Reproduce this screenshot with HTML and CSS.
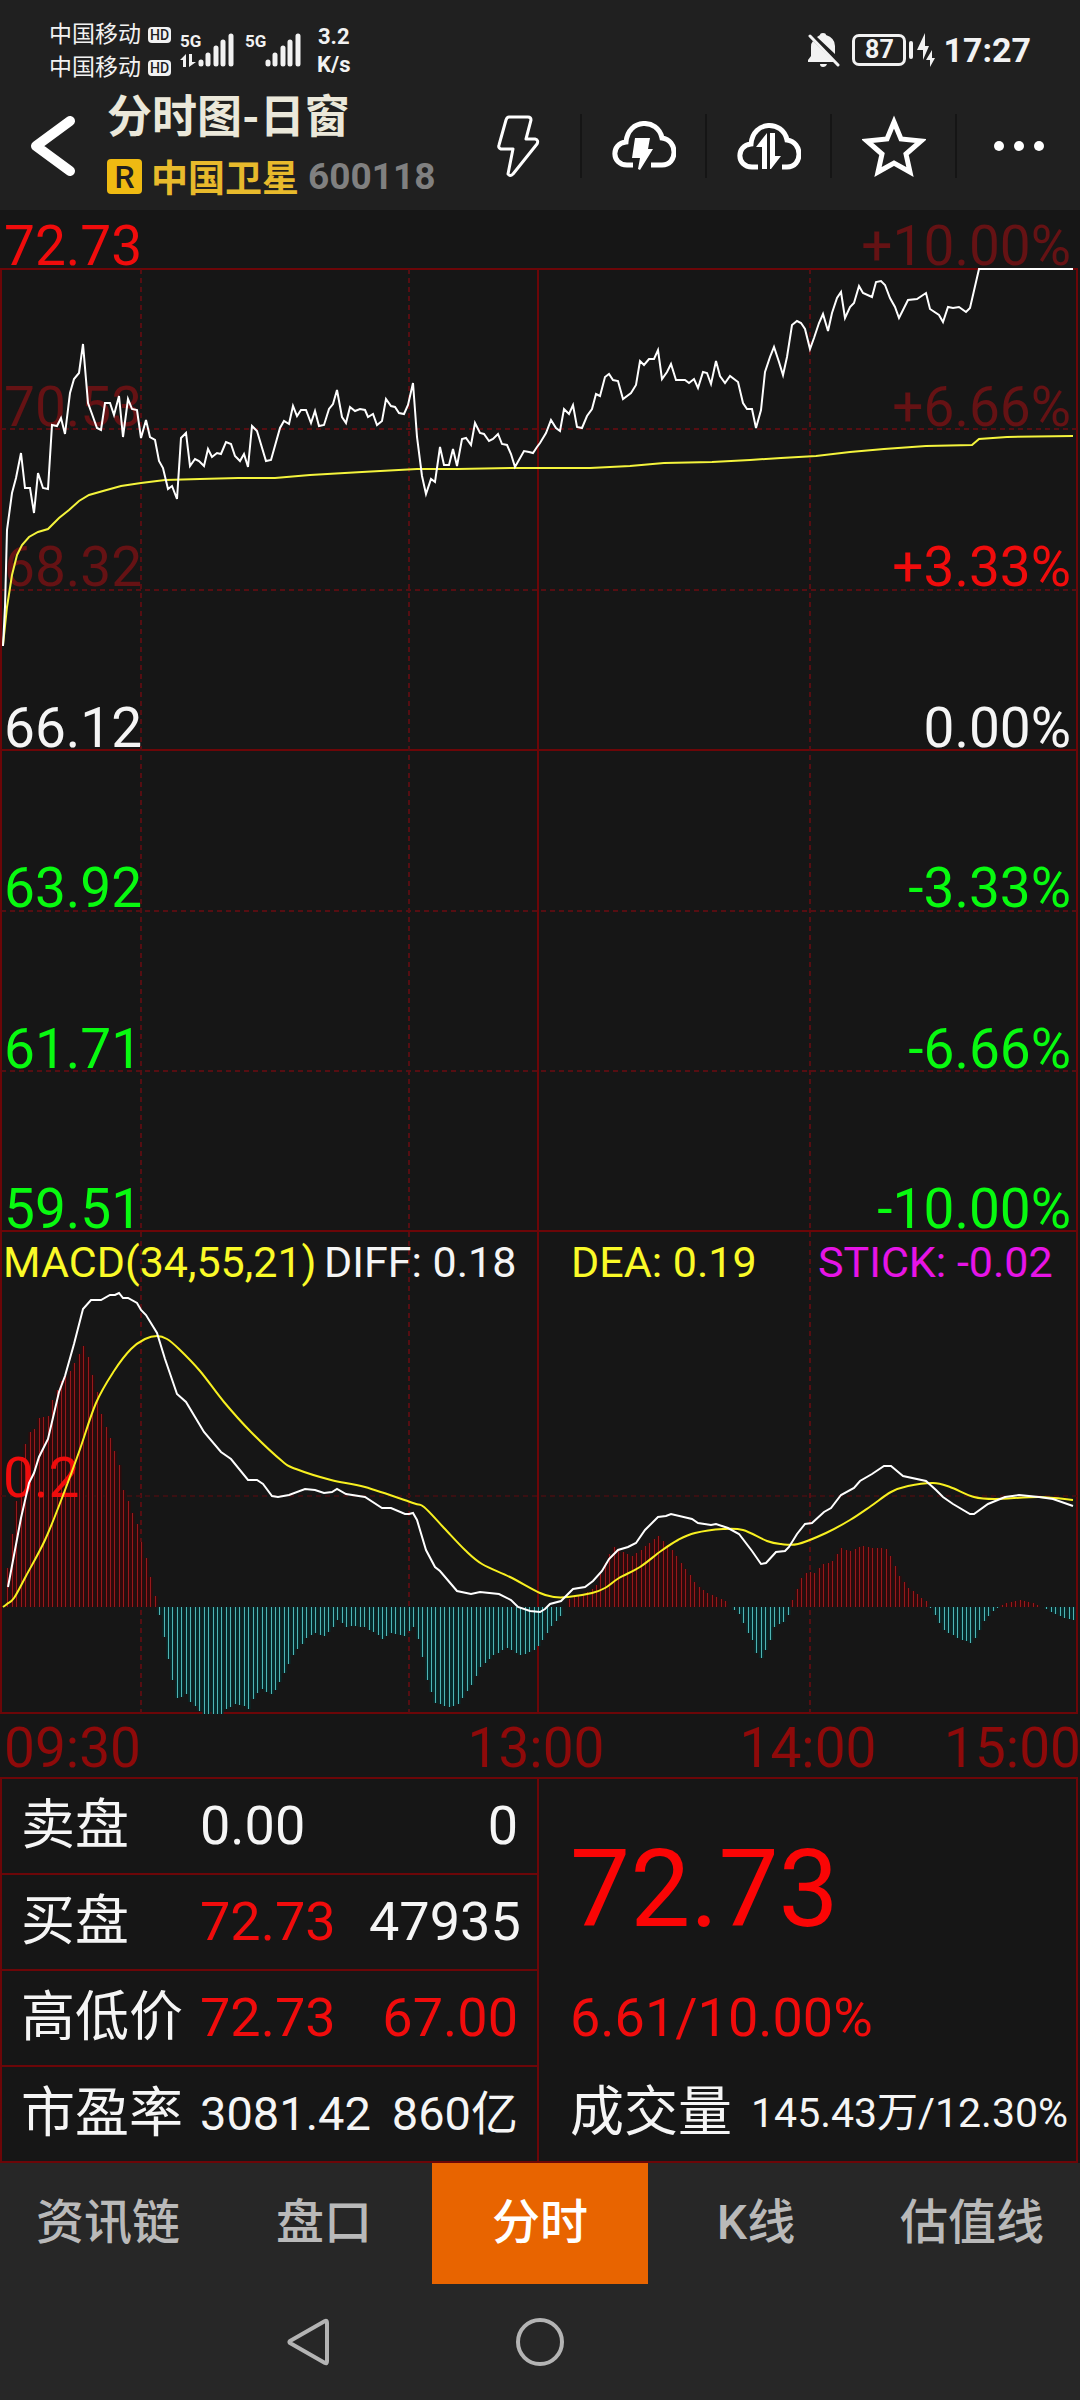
FILE: index.html
```
<!DOCTYPE html>
<html lang="zh-CN">
<head>
  <meta charset="UTF-8" />
  <meta name="viewport" content="width=device-width, initial-scale=1.0">
  <title>分时图-日窗</title>
  <link rel="stylesheet" href="styles.css">
</head>
<body>
  <div class="app">
    <header class="header">
      <div class="status-bar">
        <div class="carriers">
          <div class="carrier">中国移动<span class="hd">HD</span></div>
          <div class="carrier">中国移动<span class="hd">HD</span></div>
        </div>
        <div class="signal">
          <div class="network">
            <span>5G</span>
            <svg width="16" height="13" viewBox="0 0 16 13" fill="#f2f2f2"><path d="M6 0v13H3V6H0zM9 0h3v8h4l-7 5z"/></svg>
          </div>
          <svg width="36" height="34" viewBox="0 0 36 34" stroke="#f2f2f2" stroke-width="5" stroke-linecap="round"><path d="M3 29v2M10 22v9M18 15v16M25 9v22M33 3v28"/></svg>
        </div>
        <div class="signal second">
          <div class="network"><span>5G</span></div>
          <svg width="36" height="34" viewBox="0 0 36 34" stroke="#f2f2f2" stroke-width="5" stroke-linecap="round"><path d="M3 29v2M10 22v9M18 15v16M25 9v22M33 3v28"/></svg>
        </div>
        <div class="speed">3.2<br>K/s</div>
        <div class="status-right">
          <svg width="32" height="34" viewBox="0 0 32 34" fill="#f2f2f2"><path d="M12 2q0-2 3-2t3 2q9 3 9 11v8L9 4zM5 8l21 21H0v-2l3-4V14q0-4 2-6zM12 31h7q-1 3-4 3t-3-3z"/><path d="M2 3l28 29" stroke="#f2f2f2" stroke-width="3" stroke-linecap="round"/></svg>
          <div class="battery">87</div>
          <svg class="charge" width="18" height="34" viewBox="0 0 18 34" fill="#f2f2f2"><path d="M8 0v13h4L6 27V17H0zM15 17v8h3l-5 9v-7H9z"/></svg>
          <span class="clock">17:27</span>
        </div>
      </div>

      <div class="title-bar">
        <button class="back" aria-label="返回">
          <svg width="48" height="62" viewBox="0 0 48 62" fill="none" stroke="#fff" stroke-width="10" stroke-linecap="round" stroke-linejoin="round"><path d="M41 6L7 31l34 25"/></svg>
        </button>
        <div class="titles">
          <h1>分时图-日窗</h1>
          <div class="stock">
            <span class="badge">R</span>
            <span class="stock-name">中国卫星</span>
            <span class="stock-code">600118</span>
          </div>
        </div>
        <div class="tools">
          <button aria-label="闪电下单">
            <svg width="44" height="64" viewBox="0 0 44 64" fill="none" stroke="#fff" stroke-width="3" stroke-linejoin="round"><path d="M13 3h19q3 0 3 3l-5 19h9q4 1 2 5L17 60q-3 3-5 0l5-25H5q-3-1-2-4l7-25q1-3 3-3z"/></svg>
          </button>
          <button aria-label="云条件单">
            <svg width="64" height="50" viewBox="0 0 64 50"><path d="M21 44H15C-1 44-1 22 14 21 16-3 46-3 50 17 66 19 66 44 50 44H39" fill="none" stroke="#fff" stroke-width="5"/><path d="M23 17h15l-2 11h5L28 49l-2-1 2-11h-8z" fill="#fff"/></svg>
          </button>
          <button aria-label="云同步">
            <svg width="64" height="50" viewBox="0 0 64 50"><path d="M21 46H15C-1 46-1 24 14 23 16-1 46-1 50 19 66 21 66 46 50 46H45" fill="none" stroke="#fff" stroke-width="5"/><path d="M30 12v36h-5V26h-6zM33 12h5v23h6L34 48h-1z" fill="#fff"/></svg>
          </button>
          <button aria-label="自选">
            <svg width="64" height="62" viewBox="0 0 64 62" fill="none" stroke="#fff" stroke-width="5"><path d="M32 7l7 17 20 2-15 13 4 18-16-9-16 9 4-18L5 26l20-2z"/></svg>
          </button>
          <button aria-label="更多">
            <svg width="50" height="10" viewBox="0 0 50 10" fill="#fff"><circle cx="5" cy="5" r="5"/><circle cx="25" cy="5" r="5"/><circle cx="45" cy="5" r="5"/></svg>
          </button>
        </div>
      </div>
    </header>

    <main class="main">
      <section class="price-chart">
        <div class="axis-row up"><span>72.73</span><span class="dim">+10.00%</span></div>
        <div class="axis-row up"><span class="dim">70.53</span><span class="dim">+6.66%</span></div>
        <div class="axis-row up"><span class="dim">68.32</span><span>+3.33%</span></div>
        <div class="axis-row"><span>66.12</span><span>0.00%</span></div>
        <div class="axis-row down"><span>63.92</span><span>-3.33%</span></div>
        <div class="axis-row down"><span>61.71</span><span>-6.66%</span></div>
        <div class="axis-row down"><span>59.51</span><span>-10.00%</span></div>
        <svg class="plot" viewBox="0 -7 1080 1022" preserveAspectRatio="none">
          <path class="grid" d="M1 1015V52H1077V1015M538 52V1015M1 533H1077M1 1014H1077"/>
          <path class="grid dashed" d="M1 212H1077M1 373H1077M1 694H1077M1 854H1077M141 52V1015M409 52V1015M810 52V1015"/>
          <polyline class="line-avg" points="3,428 7,390 12,358 17,338 22,328 29,320 38,315 48,312 59,301 69,293 79,284 89,278 103,274 121,269 141,266 165,263 200,262 238,261 275,261 310,258 362,255 417,252 458,252 513,251 590,251 630,249 664,246 712,245 750,243 781,241 816,239 850,235 884,232 926,229 972,228 979,222 1007,220 1073,219"/>
          <polyline class="line-price" points="3,429 5,390 7,313 12,276 16,261 21,236 25,271 30,271 34,296 38,256 43,271 48,272 52,208 57,209 61,201 65,217 70,176 74,162 79,156 83,127 88,186 92,197 97,211 101,213 105,186 110,186 114,198 119,179 123,220 128,182 132,192 137,193 141,221 146,203 150,220 155,223 159,244 163,251 168,272 172,269 177,282 181,221 186,216 190,249 195,242 199,244 204,249 208,232 212,240 217,236 221,237 226,225 231,227 235,239 240,244 244,237 248,250 252,209 257,214 266,244 271,243 280,211 284,204 289,207 293,189 297,199 301,193 306,193 311,206 315,194 319,209 324,208 329,192 333,187 337,173 342,200 346,206 350,190 355,194 360,192 365,193 368,200 373,197 377,208 382,204 386,182 391,189 395,190 399,196 404,197 408,188 413,166 417,220 422,259 426,277 431,262 435,265 440,230 444,248 449,248 453,232 457,249 462,222 466,221 471,228 475,206 480,216 484,217 489,224 493,222 498,217 502,227 507,228 511,237 515,250 524,234 529,235 533,236 537,230 540,226 546,216 551,203 556,211 560,214 564,192 569,197 573,188 577,210 582,211 587,199 592,192 596,177 600,179 605,160 609,157 613,163 618,164 623,182 631,176 636,168 640,144 644,148 649,142 654,142 658,133 662,162 667,155 671,147 676,163 685,163 689,166 694,162 698,171 703,155 707,156 711,167 716,144 720,159 725,166 730,159 738,165 743,186 747,192 752,192 756,211 761,193 765,155 770,140 774,130 779,145 783,158 787,140 792,108 797,104 801,106 805,112 810,132 814,121 819,106 823,97 828,114 832,96 837,81 841,75 845,101 850,90 854,86 859,69 863,76 872,80 876,65 881,64 885,68 890,81 895,90 899,101 908,83 917,82 926,76 930,92 939,98 943,105 948,90 953,91 959,90 966,95 970,91 979,52 1073,52"/>
        </svg>
      </section>

      <section class="macd-chart">
        <svg class="plot" viewBox="0 0 1080 482" preserveAspectRatio="none">
          <path class="grid" d="M1 0V481H1077V0M538 0V481"/>
          <path class="grid dashed" d="M141 0V481M409 0V481M810 0V481"/>
          <path class="grid dashed faint" d="M1 264H1077"/>
          <path id="shadeUp" class="shade-up"/>
          <path id="shadeDown" class="shade-down"/>
          <path id="barsUp" class="bars-up"/>
          <path id="barsDown" class="bars-down"/>
        </svg>
        <span class="macd-level">0.2</span>
        <div class="legend">
          <span class="yellow">MACD(34,55,21)</span>
          <span>DIFF: 0.18</span>
          <span class="yellow">DEA: 0.19</span>
          <span class="magenta">STICK: -0.02</span>
        </div>
        <svg class="plot" viewBox="0 0 1080 482" preserveAspectRatio="none">
          <path id="dea" class="line-dea"/>
          <polyline class="line-diff" points="8,355 21,286 29,251 34,241 39,225 48,207 59,160 65,144 74,112 83,77 91,68 101,68 110,63 115,63 119,61 123,66 128,66 137,71 141,78 146,83 157,101 165,127 177,162 186,170 204,200 221,220 231,227 248,248 257,248 263,252 272,264 278,265 289,263 305,257 315,258 324,261 332,260 337,257 346,262 365,265 382,276 391,276 405,282 409,282 413,281 417,288 426,318 435,335 440,339 457,359 471,362 480,360 499,362 511,368 518,375 530,379 540,380 545,377 550,372 561,369 573,357 585,355 593,349 602,339 609,327 618,318 628,315 636,311 645,298 658,285 666,284 671,282 692,287 698,291 711,293 716,292 728,296 739,302 752,319 761,332 766,331 776,320 785,319 789,315 797,302 805,292 812,291 824,280 831,276 841,263 854,256 860,249 872,242 884,234 891,234 903,244 926,249 936,258 943,265 953,272 970,282 974,282 988,272 1005,265 1019,263 1039,265 1053,267 1073,274"/>
        </svg>
      </section>

      <div class="time-axis">
        <span>09:30</span>
        <span>13:00</span>
        <span>14:00</span>
        <span>15:00</span>
      </div>

      <section class="quote">
        <table class="quote-table">
          <tr><th scope="row">卖盘</th><td>0.00</td><td>0</td></tr>
          <tr><th scope="row">买盘</th><td class="red">72.73</td><td>47935</td></tr>
          <tr><th scope="row">高低价</th><td class="red">72.73</td><td class="red">67.00</td></tr>
          <tr class="small"><th scope="row">市盈率</th><td>3081.42</td><td>860亿</td></tr>
        </table>
        <div class="quote-main">
          <div class="last-price">72.73</div>
          <div class="change">6.61/10.00%</div>
          <div class="volume"><span>成交量</span><span class="volume-value">145.43万/12.30%</span></div>
        </div>
      </section>
    </main>

    <nav class="tabs">
      <button>资讯链</button>
      <button>盘口</button>
      <button class="active">分时</button>
      <button>K线</button>
      <button>估值线</button>
    </nav>

    <footer class="system-nav">
      <button aria-label="后退">
        <svg width="44" height="50" viewBox="0 0 44 50" fill="none" stroke="#b4b4b4" stroke-width="4" stroke-linejoin="round"><path d="M3 24L38 4q2-1 2 2v38q0 3-2 2L3 26q-1-1 0-2z"/></svg>
      </button>
      <button aria-label="主页">
        <svg width="50" height="50" viewBox="0 0 50 50" fill="none" stroke="#b4b4b4" stroke-width="4"><circle cx="25" cy="25" r="22"/></svg>
      </button>
    </footer>
  </div>

  <script>
    // [x, 柱高]，正值为红柱，负值为青柱
    const stick = [
      [3, 0], [7, 35], [12, 74], [17, 111], [21, 148], [25, 162], [29, 175], [34, 177], [38, 189], [48, 191],
      [52, 207], [61, 226], [70, 236], [76, 247], [83, 262], [88, 249], [92, 233], [97, 213], [101, 193],
      [105, 181], [110, 169], [119, 142], [123, 118], [132, 95], [137, 82], [142, 62], [146, 48], [150, 30],
      [154, 14], [159, -8], [163, -28], [168, -52], [172, -71], [177, -92], [186, -87], [190, -95], [204, -108],
      [221, -107], [226, -102], [235, -97], [244, -99], [248, -102], [253, -91], [261, -82], [270, -87],
      [275, -83], [284, -66], [293, -48], [306, -31], [315, -26], [324, -29], [333, -20], [338, -12],
      [346, -20], [355, -19], [364, -20], [373, -25], [382, -32], [391, -26], [404, -29], [413, -20],
      [417, -30], [422, -50], [426, -71], [435, -96], [449, -100], [457, -98], [471, -78], [480, -60],
      [493, -48], [507, -41], [520, -48], [533, -44], [540, -37], [546, -27], [552, -18], [560, -10], [565, 0],
      [570, 10], [585, 14], [595, 20], [602, 37], [608, 51], [613, 60], [622, 55], [632, 51], [640, 57],
      [653, 67], [658, 71], [671, 58], [685, 38], [698, 20], [711, 12], [725, 6], [729, 0], [738, -6],
      [743, -16], [747, -25], [752, -33], [756, -46], [761, -51], [765, -44], [770, -33], [774, -20],
      [783, -15], [788, -8], [791, 0], [792, 7], [797, 19], [801, 29], [806, 35], [814, 34], [822, 42],
      [832, 46], [841, 59], [850, 56], [861, 61], [872, 59], [885, 59], [890, 51], [899, 31], [908, 19],
      [926, 6], [930, 0], [934, -7], [943, -23], [957, -31], [970, -36], [975, -31], [984, -14], [993, -4],
      [998, 0], [1003, 3], [1019, 7], [1035, 3], [1039, 1], [1044, -1], [1053, -6], [1064, -11], [1073, -13]
    ];
    const dea = [
      [3, 375], [7, 372], [14, 366], [26, 344], [45, 308], [62, 266], [79, 220], [96, 171], [114, 139],
      [131, 117], [145, 107], [157, 104], [167, 107], [179, 117], [200, 139], [224, 170], [251, 200],
      [282, 229], [296, 237], [331, 248], [365, 255], [413, 271], [424, 275], [444, 296], [465, 318],
      [482, 332], [510, 345], [540, 361], [554, 365], [568, 365], [592, 361], [605, 356], [619, 346],
      [640, 335], [661, 319], [678, 308], [695, 301], [723, 297], [743, 298], [767, 309], [781, 312],
      [798, 312], [826, 301], [850, 288], [871, 274], [891, 260], [908, 254], [933, 251], [950, 255],
      [974, 265], [995, 267], [1039, 265], [1073, 268]
    ];
    const zero = 375;
    const minutes = 240;

    function heightAt(x) {
      const n = stick.findIndex(p => p[0] >= x);
      if (n <= 0) return stick[n === 0 ? 0 : stick.length - 1][1];
      const [x0, h0] = stick[n - 1];
      const [x1, h1] = stick[n];
      return h0 + (h1 - h0) * (x - x0) / (x1 - x0);
    }

    // 平滑曲线
    function smooth(points) {
      let d = `M${points[0]}`;
      for (let i = 0; i < points.length - 1; i++) {
        const a = points[i - 1] || points[i];
        const b = points[i];
        const c = points[i + 1];
        const e = points[i + 2] || c;
        d += `C${b[0] + (c[0] - a[0]) / 6} ${b[1] + (c[1] - a[1]) / 6}`
          + ` ${c[0] - (e[0] - b[0]) / 6} ${c[1] - (e[1] - b[1]) / 6} ${c[0]} ${c[1]}`;
      }
      return d;
    }

    let up = '';
    let down = '';
    for (let i = 0; i <= minutes; i++) {
      const x = 3 + i * 1070 / minutes;
      const h = Math.round(heightAt(x));
      const bar = `M${Math.round(x) + 0.5} ${zero}v${-h}`;
      if (h > 0) up += bar;
      if (h < 0) down += bar;
    }
    const setPath = (id, d) => document.getElementById(id).setAttribute('d', d);
    setPath('shadeUp', up);
    setPath('shadeDown', down);
    setPath('barsUp', up);
    setPath('barsDown', down);
    setPath('dea', smooth(dea));
  </script>
</body>
</html>
```
FILE: styles.css
```
* {
  margin: 0;
  padding: 0;
  box-sizing: border-box;
}

body {
  font-family: Roboto, "Noto Sans CJK SC", sans-serif;
  background: #161616;
  color: #f5f5f5;
}

button {
  border: none;
  background: none;
  color: inherit;
  font: inherit;
  cursor: pointer;
}

svg {
  display: block;
}

.app {
  min-height: 100vh;
  display: flex;
  flex-direction: column;
}

/* 顶部 */
.header {
  height: 210px;
  background: #202020;
}

.status-bar {
  display: flex;
  align-items: flex-start;
  height: 86px;
  padding: 16px 49px 0 49px;
  color: #f2f2f2;
}

.carriers {
  padding-top: 2px;
}

.carrier {
  display: flex;
  align-items: center;
  gap: 7px;
  font-size: 23px;
  line-height: 33px;
}

.hd {
  width: 23px;
  border-radius: 4px;
  background: #f2f2f2;
  color: #202020;
  font-size: 14px;
  font-weight: 500;
  line-height: 16px;
  text-align: center;
}

.signal {
  display: flex;
  margin: 17px 0 0 9px;
}

.signal.second {
  margin-left: 11px;
}

.network {
  width: 18px;
  font-size: 17px;
  font-weight: 700;
  line-height: 16px;
}

.network svg {
  margin-top: 5px;
}

.signal.second .network {
  width: 20px;
}

.speed {
  margin: 7px 0 0 16px;
  font-size: 22px;
  font-weight: 700;
  line-height: 28px;
  text-align: center;
}

.status-right {
  display: flex;
  align-items: center;
  margin: 17px 0 0 auto;
  height: 34px;
}

.battery {
  position: relative;
  width: 54px;
  height: 32px;
  margin-left: 12px;
  border: 3px solid #f2f2f2;
  border-radius: 7px;
  font-size: 25px;
  font-weight: 700;
  line-height: 26px;
  text-align: center;
}

.battery::after {
  content: '';
  position: absolute;
  top: 4px;
  right: -10px;
  width: 4px;
  height: 18px;
  border-radius: 2px;
  background: #f2f2f2;
}

.charge {
  margin: 0 8px 0 11px;
}

.clock {
  font-size: 34px;
  font-weight: 700;
}

.title-bar {
  display: flex;
  height: 120px;
}

.back {
  width: 107px;
  padding-left: 29px;
}

.titles {
  flex: 1;
  padding-top: 2px;
}

h1 {
  color: #ebe8da;
  font-size: 45px;
  font-weight: 700;
  line-height: 60px;
  white-space: nowrap;
}

.stock {
  display: flex;
  align-items: center;
  height: 56px;
  font-size: 37px;
  font-weight: 700;
  white-space: nowrap;
}

.badge {
  width: 35px;
  height: 35px;
  border-radius: 4px;
  background: #efba12;
  color: #202020;
  font-size: 32px;
  font-weight: 500;
  line-height: 36px;
  text-align: center;
}

.stock-name {
  margin: 0 9px;
  color: #e8ba2c;
}

.stock-code {
  color: #808080;
}

.tools {
  display: flex;
  align-items: center;
}

.tools button {
  width: 125px;
  height: 64px;
  display: flex;
  align-items: center;
  justify-content: center;
}

.tools button + button {
  border-left: 2px solid #151515;
}

/* 图表 */
.main {
  flex: 1;
  display: flex;
  flex-direction: column;
}

.price-chart {
  position: relative;
  flex: 1;
  display: grid;
  grid-template-rows: 59px repeat(6, 1fr);
}

.axis-row {
  display: flex;
  justify-content: space-between;
  align-items: flex-end;
  padding: 0 9px 0 4px;
  font-size: 55px;
  line-height: 46px;
}

.up,
.red {
  color: #f00c0c;
}

.down {
  color: #08fa10;
}

.dim {
  color: #651214;
}

.plot {
  position: absolute;
  top: 0;
  left: 0;
  width: 100%;
  height: 100%;
  fill: none;
  pointer-events: none;
}

.plot path,
.plot polyline {
  vector-effect: non-scaling-stroke;
}

.grid {
  stroke: #6c0608;
  stroke-width: 2;
}

.dashed {
  stroke: #560e12;
  stroke-dasharray: 5 4;
}

.faint {
  stroke: #3a1012;
}

.line-price {
  stroke: #fff;
  stroke-width: 2;
}

.line-avg {
  stroke: #f4f43c;
  stroke-width: 2;
}

.macd-chart {
  position: relative;
  height: 482px;
}

.line-diff {
  stroke: #fff;
  stroke-width: 2;
}

.line-dea {
  stroke: #f8f020;
  stroke-width: 2;
}

.shade-up {
  stroke: #2e0a0b;
  stroke-width: 4;
}

.shade-down {
  stroke: #062a2b;
  stroke-width: 4;
}

.bars-up {
  stroke: #98181b;
  stroke-width: 1;
}

.bars-down {
  stroke: #4fb4b4;
  stroke-width: 1;
}

.macd-level {
  position: absolute;
  top: 218px;
  left: 3px;
  color: #f00c0c;
  font-size: 55px;
  line-height: 56px;
}

.legend {
  position: relative;
  display: grid;
  grid-template-columns: 321px 247px 247px 1fr;
  padding: 3px 0 0 3px;
  font-size: 43px;
  line-height: 54px;
  white-space: nowrap;
}

.yellow {
  color: #fafa28;
}

.magenta {
  color: #e614e6;
}

.time-axis {
  display: grid;
  grid-template-columns: 396px 272px 272px 1fr;
  padding: 5px 4px 0 4px;
  color: #8e0a0a;
  font-size: 55px;
  line-height: 58px;
}

.time-axis span {
  display: flex;
  justify-content: center;
}

.time-axis span:first-child {
  justify-content: flex-start;
}

.time-axis span:last-child {
  justify-content: flex-end;
}

/* 报价 */
.quote {
  display: grid;
  grid-template-columns: 1fr 1fr;
  margin: 0 2px 0 0;
  height: 386px;
  border: 2px solid #6c0608;
  font-size: 54px;
}

.quote-table {
  width: 100%;
  height: 100%;
  border-collapse: collapse;
  border-right: 2px solid #6c0608;
  table-layout: fixed;
}

.quote-table tr + tr {
  border-top: 2px solid #6c0608;
}

.quote-table th {
  width: 198px;
  padding-left: 19px;
  font-weight: 400;
  line-height: 60px;
  text-align: left;
  white-space: nowrap;
}

.quote-table td {
  line-height: 60px;
  white-space: nowrap;
}

.quote-table td:last-child {
  padding-right: 19px;
  text-align: right;
}

.small td {
  font-size: 47px;
}

.quote-main {
  display: grid;
  grid-template-rows: 2fr 1fr 1fr;
  align-items: center;
  padding: 0 8px 0 31px;
  white-space: nowrap;
}

.last-price {
  padding-top: 30px;
  color: #fa0505;
  font-size: 107px;
  line-height: 120px;
}

.change {
  color: #f00c0c;
}

.volume {
  display: flex;
  align-items: center;
  justify-content: space-between;
  line-height: 60px;
}

.volume-value {
  font-size: 41px;
}

/* 底部 */
.tabs {
  display: grid;
  grid-template-columns: repeat(5, 1fr);
  height: 121px;
  background: #272727;
}

.tabs button {
  padding-bottom: 12px;
  color: #b9b9b9;
  font-size: 48px;
  font-weight: 500;
}

.tabs .active {
  background: #e86400;
  color: #fff;
}

.system-nav {
  display: grid;
  grid-template-columns: repeat(3, 231px);
  justify-content: center;
  height: 116px;
  background: #272727;
}

.system-nav button {
  display: flex;
  align-items: center;
  justify-content: center;
}
```
